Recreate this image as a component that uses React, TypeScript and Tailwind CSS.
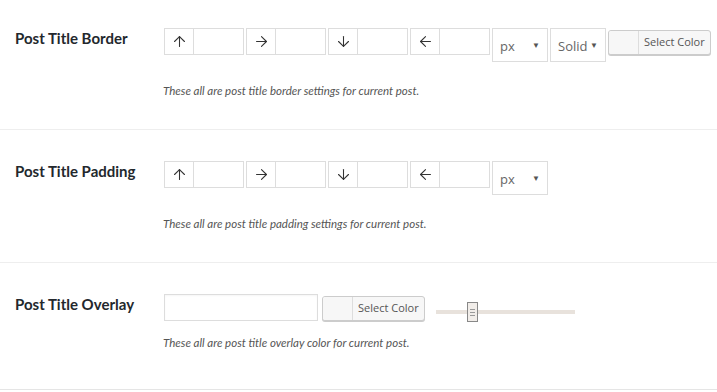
import { ArrowUp, ArrowRight, ArrowDown, ArrowLeft } from "lucide-react";

const sideArrows = [
  { key: "top", Icon: ArrowUp },
  { key: "right", Icon: ArrowRight },
  { key: "bottom", Icon: ArrowDown },
  { key: "left", Icon: ArrowLeft },
];

const SideInputs = () => (
  <div className="flex gap-[2px]">
    {sideArrows.map(({ key, Icon }) => (
      <div key={key} className="flex h-[27px]">
        <div className="w-[30px] h-full border border-[#ddd] flex items-center justify-center text-[#333]">
          <Icon size={17} strokeWidth={1.5} />
        </div>
        <div className="w-[50px] h-full border border-l-0 border-[#ddd] bg-white" />
      </div>
    ))}
  </div>
);

const SelectBox = ({ label }: { label: string }) => (
  <div className="w-[56px] h-[34px] border border-[#ddd] bg-white flex items-center justify-between pl-[7px] pr-[7px] text-[13px] text-[#666] font-['Open_Sans',sans-serif] whitespace-nowrap">
    <span className="pt-[3px]">{label}</span>
    <span className="text-[8px] text-[#555]">▼</span>
  </div>
);

const ColorButton = () => (
  <div className="flex h-[25px] border border-[#ccc] rounded-[3px] bg-[#f7f7f7] shadow-[0_1px_0_#ccc] overflow-hidden whitespace-nowrap">
    <div className="w-[30px] h-full border-r border-[#ddd] bg-[#f7f7f7]" />
    <div className="px-[5px] flex items-center text-[11px] text-[#555] font-['Open_Sans',sans-serif]">
      Select Color
    </div>
  </div>
);

const Helper = ({ children, className }: { children: string; className: string }) => (
  <p className={`${className} text-[11.5px] leading-[16px] italic text-[#555] font-['Lato',sans-serif] whitespace-nowrap`}>
    {children}
  </p>
);

const Label = ({ children }: { children: string }) => (
  <div className="w-[149px] shrink-0 text-[15px] leading-[20px] font-bold text-[#23282d] font-['Lato',sans-serif]">
    {children}
  </div>
);

export default function App() {
  return (
    <div className="w-[717px] h-[392px] bg-white overflow-hidden">
      <div className="flex h-[130px] pt-[28px] pl-[15px] border-b border-[#eee]">
        <Label>Post Title Border</Label>
        <div>
          <div className="flex items-start gap-[2px]">
            <SideInputs />
            <SelectBox label="px" />
            <SelectBox label="Solid" />
            <div className="pt-[2px]">
              <ColorButton />
            </div>
          </div>
          <Helper className="mt-[21px] -ml-[1px]">These all are post title border settings for current post.</Helper>
        </div>
      </div>

      <div className="flex h-[133px] pt-[31px] pl-[15px] border-b border-[#eee]">
        <Label>Post Title Padding</Label>
        <div>
          <div className="flex items-start gap-[2px]">
            <SideInputs />
            <SelectBox label="px" />
          </div>
          <Helper className="mt-[21px] -ml-[1px]">These all are post title padding settings for current post.</Helper>
        </div>
      </div>

      <div className="flex h-[127px] pt-[31px] pl-[15px] border-b border-[#e5e5e5]">
        <Label>Post Title Overlay</Label>
        <div>
          <div className="flex items-start">
            <div className="w-[154px] h-[27px] border border-[#ddd] bg-white shadow-[inset_0_1px_2px_rgba(0,0,0,0.04)]" />
            <div className="ml-[4px] pt-[2px]">
              <ColorButton />
            </div>
            <div className="ml-[11px] mt-[8px] relative w-[139px] h-[20px] flex items-center">
              <div className="w-full h-[4px] bg-[#e8e2dc]" />
              <div className="absolute left-[31px] top-0 w-[11px] h-[20px] border border-[#888] bg-[#f1ede9] flex flex-col items-center justify-center gap-[2px]">
                <div className="w-[5px] h-px bg-[#999]" />
                <div className="w-[5px] h-px bg-[#999]" />
                <div className="w-[5px] h-px bg-[#999]" />
              </div>
            </div>
          </div>
          <Helper className="mt-[13px] -ml-[1px]">These all are post title overlay color for current post.</Helper>
        </div>
      </div>
    </div>
  );
}
